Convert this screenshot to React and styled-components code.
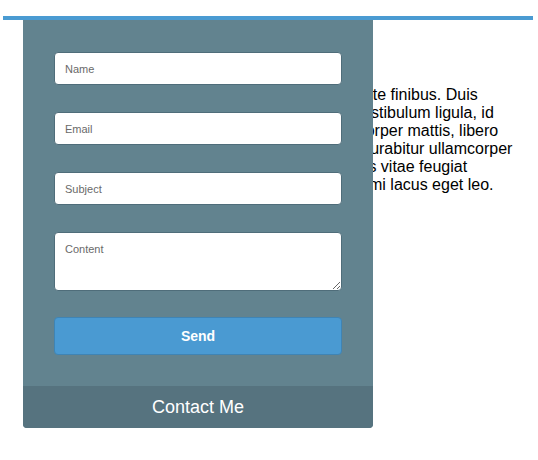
import React from 'react';
import styled, { createGlobalStyle } from 'styled-components';

const GlobalStyle = createGlobalStyle`
  html, body {
    margin: 0;
    padding: 0;
    background: #ffffff;
  }
  body {
    font-family: "Liberation Sans", Arial, Helvetica, sans-serif;
    color: #000000;
  }
`;

const TopBar = styled.header`
  height: 4px;
  margin: 16px 5px 0 3px;
  background: #4a9bd2;
`;

const Main = styled.main`
  padding: 66px 0 0 66px;
`;

const Paragraph = styled.p`
  margin: 0;
  font-size: 16px;
  line-height: 18px;
  white-space: nowrap;
`;

const Line = styled.span`
  display: block;
`;

const ContactPanel = styled.aside`
  position: fixed;
  top: 20px;
  left: 23px;
  width: 350px;
  display: flex;
  flex-direction: column;
  background: #62838f;
  border-radius: 0 0 4px 4px;
  overflow: hidden;
`;

const Form = styled.form`
  display: flex;
  flex-direction: column;
  gap: 27px;
  padding: 32px 31px 31px;
`;

const fieldStyles = `
  box-sizing: border-box;
  width: 100%;
  margin: 0;
  padding: 0 10px;
  border: 1px solid #4f6d7a;
  border-radius: 4px;
  background: #ffffff;
  font-family: "Liberation Sans", Arial, Helvetica, sans-serif;
  font-size: 11px;
  color: #333333;
  outline: none;

  &::placeholder {
    color: #6a6a6a;
    opacity: 1;
  }
`;

const Input = styled.input`
  ${fieldStyles}
  height: 33px;
`;

const TextArea = styled.textarea`
  ${fieldStyles}
  display: block;
  height: 59px;
  padding-top: 10px;
  resize: both;
`;

const SendButton = styled.button`
  height: 38px;
  margin-top: -1px;
  border: 1px solid #3f84b4;
  border-radius: 4px;
  background: #4a9ad2;
  color: #ffffff;
  font-family: "Liberation Sans", Arial, Helvetica, sans-serif;
  font-size: 14px;
  font-weight: bold;
  cursor: pointer;
`;

const PanelFooter = styled.div`
  height: 42px;
  display: flex;
  align-items: center;
  justify-content: center;
  background: #56737f;
  color: #ffffff;
  font-size: 18px;
`;

const lines = [
  'Lorem ipsum dolor sit amet, consectetur ante finibus. Duis',
  'Praesent at mauris nec ligula tincidunt a vestibulum ligula, id',
  'Sed quis felis nec sapien lacinia et, ullamcorper mattis, libero',
  'Etiam sit amet orci eget eros in faucibus. Curabitur ullamcorper',
  'Nunc non nisl at nulla dignissim sed ut risus vitae feugiat',
  'Vivamus eleifend, magna a tempor sapien mi lacus eget leo.',
];

const App = () => {
  return (
    <>
      <GlobalStyle />
      <TopBar />
      <Main>
        <Paragraph>
          {lines.map((text) => (
            <Line key={text}>{text}</Line>
          ))}
        </Paragraph>
      </Main>
      <ContactPanel>
        <Form onSubmit={(e) => e.preventDefault()}>
          <Input type="text" placeholder="Name" />
          <Input type="email" placeholder="Email" />
          <Input type="text" placeholder="Subject" />
          <TextArea placeholder="Content" />
          <SendButton type="submit">Send</SendButton>
        </Form>
        <PanelFooter>Contact Me</PanelFooter>
      </ContactPanel>
    </>
  );
};

export default App;
